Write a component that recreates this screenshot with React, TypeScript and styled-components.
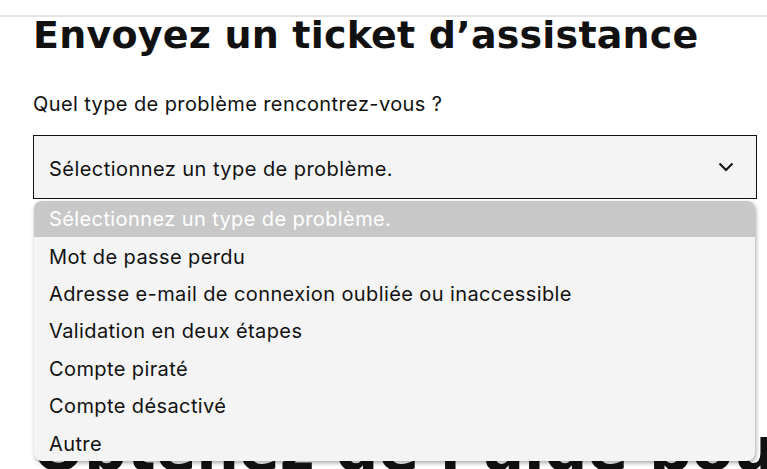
import styled, { createGlobalStyle } from 'styled-components';

const GlobalStyle = createGlobalStyle`
  html, body {
    margin: 0;
    padding: 0;
    background: #ffffff;
  }
  body {
    font-family: Inter, 'Liberation Sans', Arial, sans-serif;
    color: #111111;
  }
`;

const PROBLEMS = [
  'Sélectionnez un type de problème.',
  'Mot de passe perdu',
  'Adresse e-mail de connexion oubliée ou inaccessible',
  'Validation en deux étapes',
  'Compte piraté',
  'Compte désactivé',
  'Autre',
];

const App = () => {
  return (
    <Page>
      <GlobalStyle />
      <TopRule />
      <Content>
        <Title>Envoyez un ticket d’assistance</Title>
        <Label>Quel type de problème rencontrez-vous ?</Label>
        <SelectWrap>
          <SelectBox>
            <SelectText>{PROBLEMS[0]}</SelectText>
            <svg width="16" height="10" viewBox="0 0 16 10" fill="none">
              <polyline
                points="1.5,1.5 8,8 14.5,1.5"
                stroke="#111"
                strokeWidth="2"
                fill="none"
              />
            </svg>
          </SelectBox>
          <OptionList>
            {PROBLEMS.map((label, i) => (
              <Option key={label} $active={i === 0}>
                {label}
              </Option>
            ))}
          </OptionList>
        </SelectWrap>
        <SectionTitle>Obtenez de l’aide pour votre compte</SectionTitle>
      </Content>
    </Page>
  );
};

export default App;

const Page = styled.div`
  width: 767px;
  height: 469px;
  overflow: hidden;
  position: relative;
`;

const TopRule = styled.div`
  margin-top: 15px;
  height: 2px;
  background: #e5e5e5;
`;

const Content = styled.div`
  padding-left: 33px;
  width: 724px;
`;

const Title = styled.h1`
  margin: 1px 0 0;
  font-family: 'DejaVu Sans', Inter, sans-serif;
  font-size: 38px;
  line-height: 34px;
  font-weight: 700;
  letter-spacing: 0.2px;
  white-space: nowrap;
`;

const Label = styled.div`
  margin-top: 40px;
  font-size: 20px;
  line-height: 24px;
  letter-spacing: 0.4px;
`;

const SelectWrap = styled.div`
  position: relative;
  margin-top: 19px;
`;

const SelectBox = styled.div`
  height: 62px;
  border: 1px solid #111;
  background: #f4f4f4;
  display: flex;
  align-items: center;
  justify-content: space-between;
  padding: 0 22px 0 15px;
`;

const SelectText = styled.span`
  font-size: 20px;
  letter-spacing: 0.45px;
  padding-top: 4px;
`;

const OptionList = styled.div`
  position: absolute;
  top: 66px;
  left: 1px;
  right: 2px;
  background: #f4f4f4;
  border-radius: 8px;
  overflow: hidden;
  box-shadow: 1px 2px 4px rgba(0, 0, 0, 0.35);
  z-index: 2;
`;

const Option = styled.div<{ $active?: boolean }>`
  height: ${(p) => (p.$active ? '36px' : '37.4px')};
  display: flex;
  align-items: center;
  padding: ${(p) => (p.$active ? '0' : '2px')} 0 0 15px;
  box-sizing: border-box;
  font-size: 20px;
  letter-spacing: 0.4px;
  color: ${(p) => (p.$active ? '#ffffff' : '#111111')};
  background: ${(p) => (p.$active ? '#c8c8c8' : 'transparent')};
`;

const SectionTitle = styled.h2`
  margin: 220px 0 0;
  font-family: 'DejaVu Sans', Inter, sans-serif;
  font-size: 60px;
  line-height: 60px;
  font-weight: 700;
  white-space: nowrap;
`;
